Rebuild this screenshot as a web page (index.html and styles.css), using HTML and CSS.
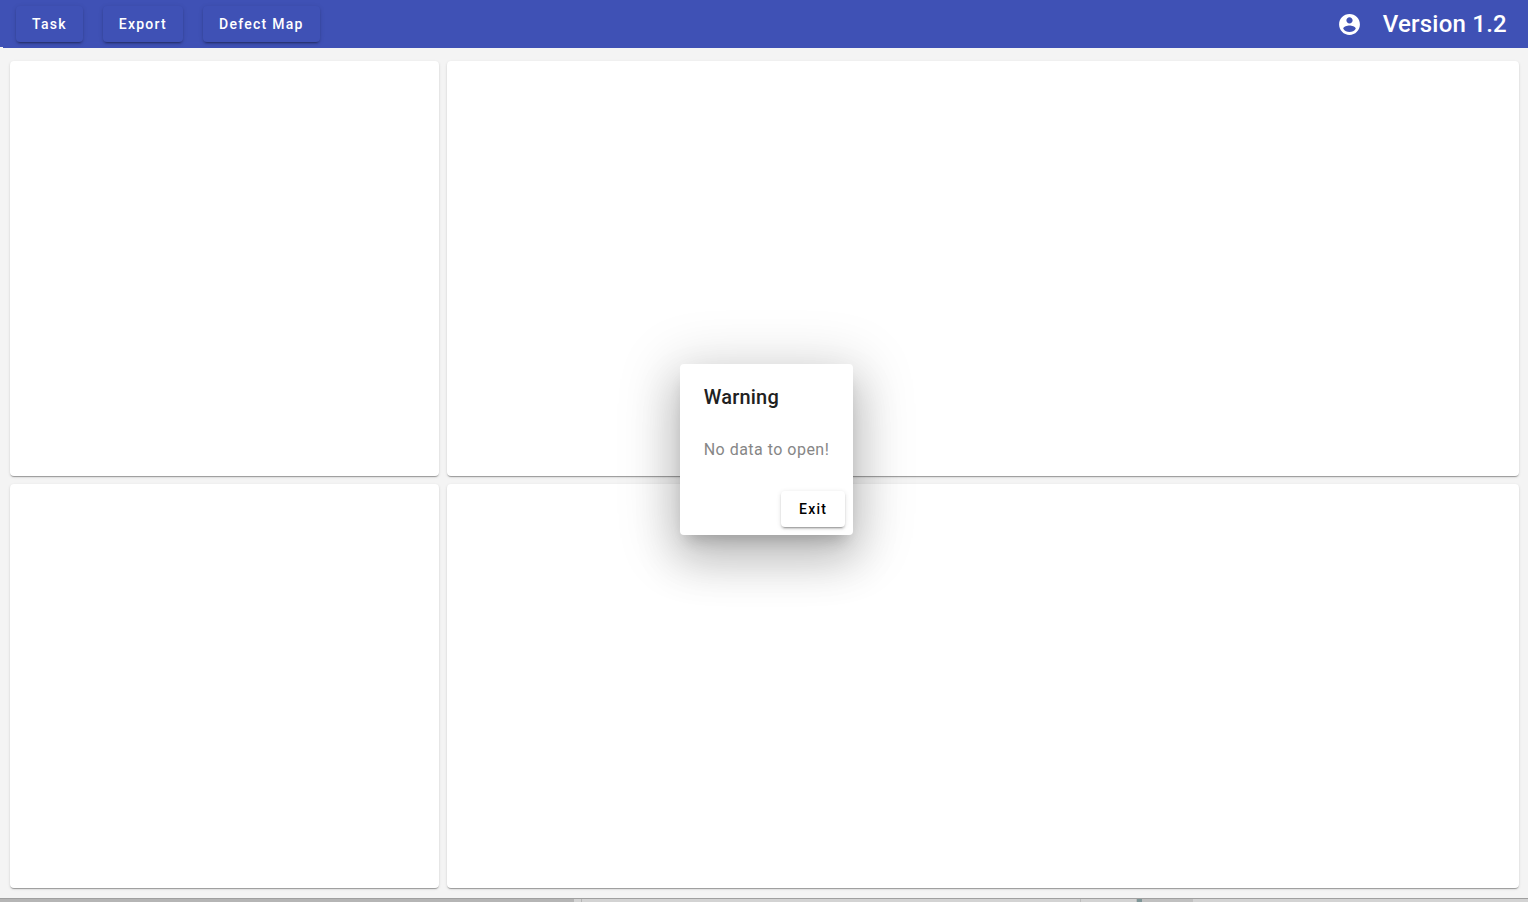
FILE: index.html
```html
<!DOCTYPE html>
<html lang="en">
<head>
    <meta charset="UTF-8">
    <meta name="viewport" content="width=device-width, initial-scale=1.0">
    <title>Defect Map</title>
    <link rel="stylesheet" href="styles.css">
</head>
<body>
    <div class="window">
        <header class="toolbar">
            <nav class="menu">
                <button type="button" class="btn btn-primary">Task</button>
                <button type="button" class="btn btn-primary">Export</button>
                <button type="button" class="btn btn-primary">Defect Map</button>
            </nav>
            <div class="info">
                <svg class="account" viewBox="0 0 24 24" aria-hidden="true">
                    <path fill="currentColor" d="M12 2C6.48 2 2 6.48 2 12s4.48 10 10 10 10-4.48 10-10S17.52 2 12 2zm0 3c1.66 0 3 1.34 3 3s-1.34 3-3 3-3-1.34-3-3 1.34-3 3-3zm0 14.200c-2.500 0-4.710-1.280-6-3.220.030-1.990 4-3.080 6-3.080 1.990 0 5.970 1.090 6 3.080-1.290 1.940-3.500 3.220-6 3.220z"/>
                </svg>
                <span class="version">Version 1.2</span>
            </div>
        </header>

        <main class="panels">
            <section class="panel"></section>
            <section class="panel"></section>
            <section class="panel"></section>
            <section class="panel"></section>
        </main>

        <div class="overlay">
            <div class="dialog" role="alertdialog" aria-labelledby="dialogTitle" aria-describedby="dialogText">
                <h2 id="dialogTitle">Warning</h2>
                <p id="dialogText">No data to open!</p>
                <div class="actions">
                    <button type="button" class="btn">Exit</button>
                </div>
            </div>
        </div>
    </div>

    <!-- edge of the desktop below the window -->
    <div class="desktop">
        <div class="desktop-left"></div>
        <div class="desktop-gap"></div>
        <div class="desktop-middle"></div>
        <div class="desktop-tabs"></div>
        <div class="desktop-accent"></div>
        <div class="desktop-gray"></div>
        <div class="desktop-right"></div>
    </div>
</body>
</html>
```
FILE: styles.css
```css
* {
    box-sizing: border-box;
}

body {
    margin: 0;
    height: 100vh;
    display: flex;
    flex-direction: column;
    font-family: Roboto, sans-serif;
    background: #f4f4f4;
    color: #212121;
}

.window {
    position: relative;
    flex: 1;
    display: flex;
    flex-direction: column;
}

.toolbar {
    position: relative;
    display: flex;
    align-items: center;
    justify-content: space-between;
    height: 48px;
    padding: 0 21px 0 16px;
    background: #3f51b5;
    color: #fff;
}

.toolbar::before {
    content: "";
    position: absolute;
    left: 0;
    bottom: 0;
    width: 3px;
    height: 1px;
    background: #f4f4f4;
}

.menu {
    display: flex;
    gap: 20px;
}

.btn {
    height: 36px;
    padding: 0 18px;
    border: none;
    border-radius: 4px;
    font-family: inherit;
    font-size: 14px;
    font-weight: 500;
    letter-spacing: 0.09em;
    background: #fff;
    color: #000;
    box-shadow: 0 3px 1px -2px rgba(0, 0, 0, 0.2), 0 2px 2px rgba(0, 0, 0, 0.14), 0 1px 5px rgba(0, 0, 0, 0.12);
    cursor: pointer;
}

.btn-primary {
    padding: 0 16px;
    background: #3f51b5;
    color: #fff;
}

.info {
    display: flex;
    align-items: center;
    gap: 21px;
}

.account {
    width: 25px;
    height: 25px;
}

.version {
    font-size: 24px;
    line-height: 32px;
    font-weight: 500;
    letter-spacing: 0.01em;
}

.panels {
    flex: 1;
    display: grid;
    grid-template-columns: 2fr 5fr;
    grid-template-rows: 415fr 404fr;
    gap: 8px;
    padding: 13px 9px 10px 10px;
}

.panel {
    background: #fff;
    border-radius: 4px;
    box-shadow: 0 2px 1px -1px rgba(0, 0, 0, 0.2), 0 1px 1px rgba(0, 0, 0, 0.14), 0 1px 3px rgba(0, 0, 0, 0.12);
}

.overlay {
    position: absolute;
    inset: 0 0 0 5px;
    display: flex;
    align-items: center;
    justify-content: center;
}

.dialog {
    background: #fff;
    border-radius: 4px;
    box-shadow: 0 11px 15px -7px rgba(0, 0, 0, 0.2), 0 24px 44px 3px rgba(0, 0, 0, 0.16), 0 9px 56px 10px rgba(0, 0, 0, 0.15);
}

.dialog h2 {
    margin: 0;
    padding: 17px 24px 9px;
    font-size: 20px;
    line-height: 32px;
    font-weight: 500;
    letter-spacing: 0.01em;
}

.dialog p {
    margin: 0;
    padding: 16px 24px 21px;
    font-size: 16px;
    line-height: 24px;
    letter-spacing: 0.03em;
    color: #868686;
}

.actions {
    display: flex;
    justify-content: flex-end;
    padding: 8px;
}

.desktop {
    display: flex;
    height: 4px;
    border-top: 1px solid #a0a0a0;
    background: #d3d3d3;
}

.desktop-left {
    flex: 575;
    background: #b5b5b5;
}

.desktop-gap {
    flex: 7;
    border-right: 1px solid #b5b5b5;
}

.desktop-middle {
    flex: 499;
}

.desktop-tabs {
    flex: 55;
    border-left: 1px solid #bdbdbd;
    border-right: 1px solid #bdbdbd;
}

.desktop-accent {
    flex: 5;
    background: #7f9698;
}

.desktop-gray {
    flex: 51;
    background: #c0c0c0;
}

.desktop-right {
    flex: 336;
}
```
